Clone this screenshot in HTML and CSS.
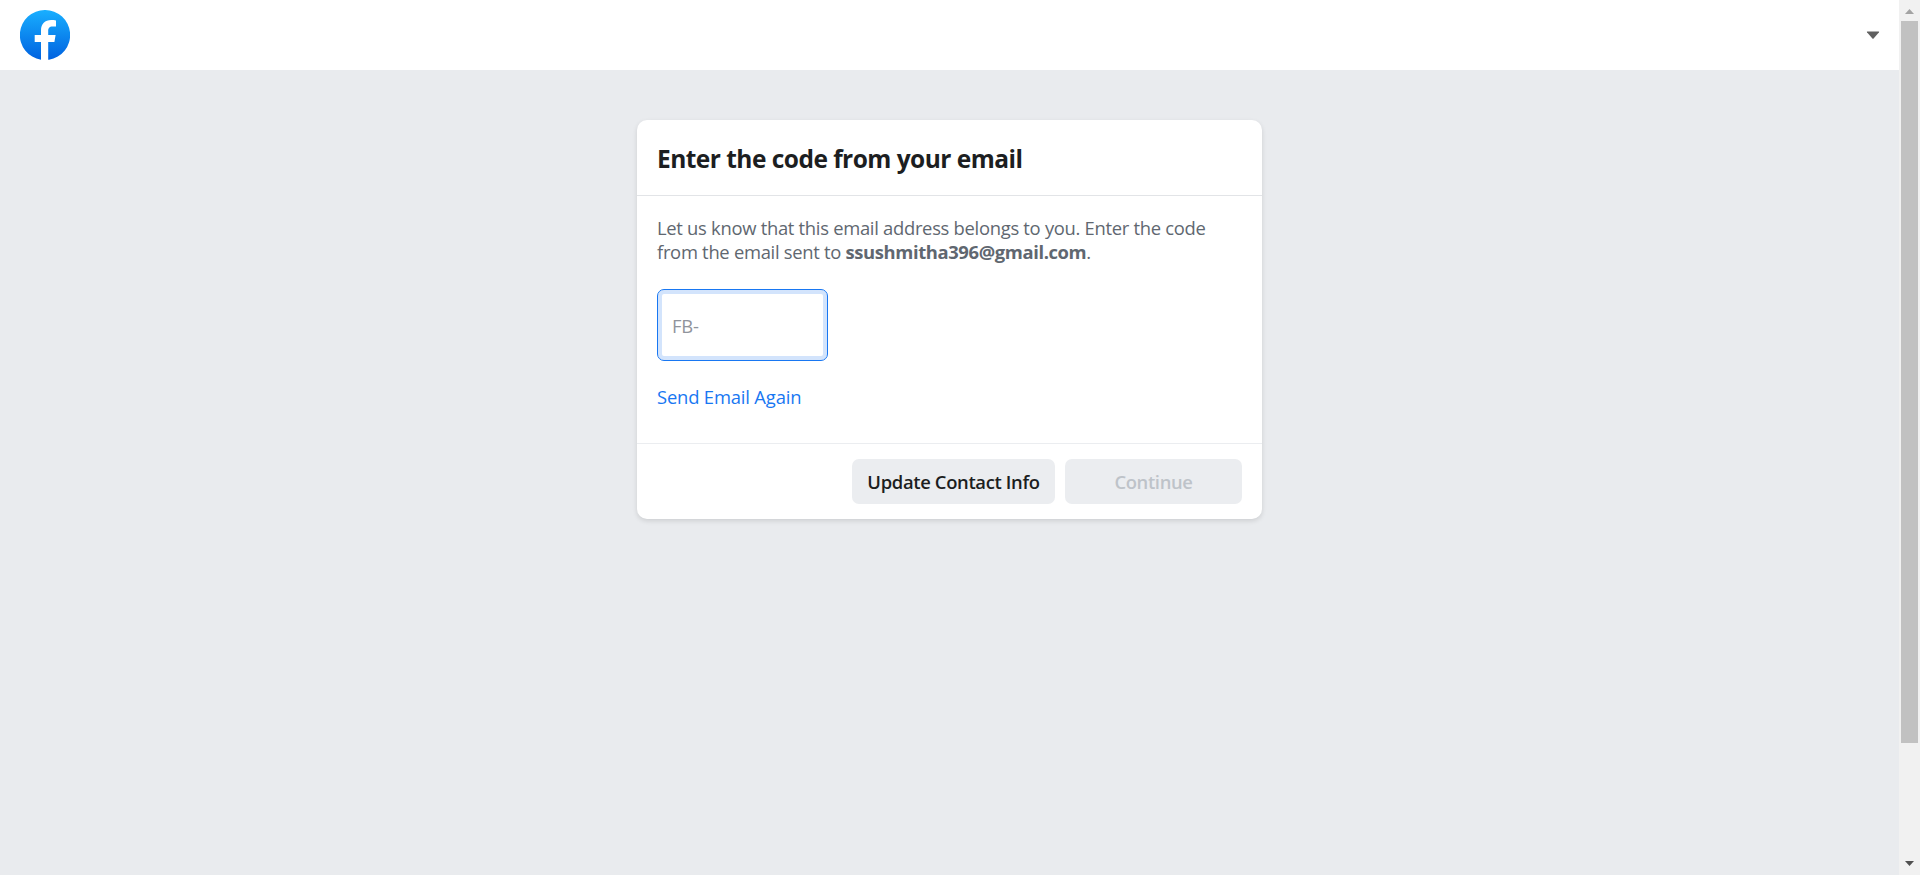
FILE: index.html
```html
<!DOCTYPE html>
<html lang="en">
<head>
<meta charset="utf-8">
<title>Enter the code from your email</title>
<link rel="stylesheet" href="styles.css">
</head>
<body>
<div class="page">
  <header class="topbar">
    <svg class="logo" viewBox="0 0 50 50" aria-label="Facebook">
      <defs><linearGradient id="blue" x1="0" y1="0" x2="0" y2="1"><stop offset="0" stop-color="#19afff"/><stop offset="1" stop-color="#0062e0"/></linearGradient></defs>
      <path fill="url(#blue)" d="M25 0a25 25 0 0 1 4 49.700h-8A25 25 0 0 1 25 0z"/>
      <path fill="#fff" d="M21 50V32h-6.300v-7H21v-4.500C21 13.700 25 10 31.200 10c1.800 0 3.300.1 4.800.4v6.100h-3.400c-3.400 0-4.400 2-4.400 4.200V25h7.400l-1.200 7h-6.200v18z"/>
    </svg>
    <svg class="caret" viewBox="0 0 14 9"><path d="M1.300.5h11.400q.8 0 .3.700L7.600 7.500q-.6.600-1.200 0L1 1.200Q.5.500 1.300.5z"/></svg>
  </header>
  <main class="content">
    <section class="card">
      <div class="card-header"><h1 class="title">Enter the code from your email</h1></div>
      <div class="card-body">
        <p class="message"><span class="line-one">Let us know that this email address belongs to you. Enter the code</span><br><span class="line-two">from the email sent to </span><b class="email">ssushmitha396@gmail.com</b>.</p>
        <div class="field"><span class="prefix">FB-</span></div>
        <a class="resend">Send Email Again</a>
      </div>
      <div class="card-footer">
        <div class="button update">Update Contact Info</div>
        <div class="button continue">Continue</div>
      </div>
    </section>
  </main>
</div>
<aside class="scrollbar">
  <svg class="arrow" viewBox="0 0 21 21"><path fill="#a3a3a3" d="M6 14l4.500-5 4.500 5z"/></svg>
  <div class="thumb"></div>
  <svg class="arrow" viewBox="0 0 21 21"><path fill="#505050" d="M6 7l4.500 5L15 7z"/></svg>
</aside>
</body>
</html>
```
FILE: styles.css
```css
* { box-sizing: border-box; }
body { margin: 0; height: 875px; display: flex; overflow: hidden; background: #e9ebee; font-family: "Open Sans", "Noto Sans", sans-serif; font-size: 18.4px; color: #606770; }
.page { width: 1899px; }
.topbar { height: 70px; background: #fff; display: flex; align-items: center; justify-content: space-between; padding: 0 19px 0 20px; }
.logo { width: 50px; height: 50px; }
.caret { width: 14px; height: 9px; fill: #606060; }
.content { display: flex; justify-content: center; padding-top: 50px; }
.card { width: 625px; height: 399px; background: #fff; border-radius: 10px; box-shadow: 0 2px 5px rgba(0, 0, 0, .12); display: flex; flex-direction: column; }
.card-header { height: 76px; border-bottom: 1px solid #e2e4e7; padding: 20px 20px 0; }
.title { margin: 0; font-size: 24.5px; line-height: 38px; font-weight: 700; letter-spacing: -.53px; color: #1c1e21; white-space: nowrap; }
.card-body { height: 247px; padding: 20px; }
.message { margin: 0; line-height: 24px; letter-spacing: -.29px; white-space: nowrap; }
.email { letter-spacing: -.38px; }
.field { margin-top: 25px; width: 171px; height: 72px; border: 1px solid #1877f2; border-radius: 7px; box-shadow: inset 0 0 0 4px #d3e4fc; padding-left: 14px; line-height: 71px; letter-spacing: -.2px; color: #90949c; }
.resend { display: inline-block; margin-top: 24px; line-height: 24px; letter-spacing: -.17px; color: #1877f2; white-space: nowrap; }
.card-footer { height: 76px; border-top: 1px solid #ebedf0; padding: 15px 20px; display: flex; gap: 10px; justify-content: flex-end; }
.button { height: 45px; border-radius: 7px; background: #ebedf0; line-height: 46px; text-align: center; white-space: nowrap; font-weight: 600; letter-spacing: -.34px; }
.update { width: 203px; color: #1c1e21; }
.continue { width: 177px; color: #bec3c9; }
.scrollbar { width: 21px; height: 875px; background: #f1f1f1; display: flex; flex-direction: column; align-items: center; }
.arrow { width: 21px; height: 21px; }
.thumb { width: 17px; height: 722px; margin-bottom: 111px; background: #c1c1c1; }
```
